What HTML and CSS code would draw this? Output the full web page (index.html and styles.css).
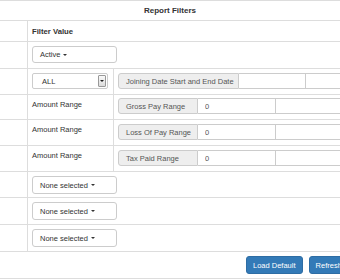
FILE: index.html
```html
<!DOCTYPE html>
<html lang="en">
<head>
    <meta charset="UTF-8">
    <title>Report Filters</title>
    <link rel="stylesheet" href="styles.css">
</head>
<body>
    <div class="filters">
        <div class="row row-title">
            <div class="title">Report Filters</div>
        </div>
        <div class="row row-head">
            <div class="c0"></div>
            <div class="cell-wide head-label">Filter Value</div>
        </div>
        <div class="row h27">
            <div class="c0"></div>
            <div class="cell-wide">
                <button class="dd-btn">Active <span class="caret"></span></button>
            </div>
        </div>
        <div class="row h26">
            <div class="c0"></div>
            <div class="c1">
                <div class="select-box">
                    <span>ALL</span>
                    <span class="select-arrow"><span class="arrow-tri"></span></span>
                </div>
            </div>
            <div class="c2">
                <div class="input-group">
                    <span class="addon w-date">Joining Date Start and End Date</span>
                    <input class="field w-67" type="text" value="">
                    <input class="field w-80" type="text" value="">
                </div>
            </div>
        </div>
        <div class="row h25 pad3">
            <div class="c0"></div>
            <div class="c1 label">Amount Range</div>
            <div class="c2">
                <div class="input-group">
                    <span class="addon w-amt">Gross Pay Range</span>
                    <input class="field w-78" type="text" value="0">
                    <input class="field w-80" type="text" value="">
                </div>
            </div>
        </div>
        <div class="row h26">
            <div class="c0"></div>
            <div class="c1 label">Amount Range</div>
            <div class="c2">
                <div class="input-group">
                    <span class="addon w-amt">Loss Of Pay Range</span>
                    <input class="field w-78" type="text" value="0">
                    <input class="field w-80" type="text" value="">
                </div>
            </div>
        </div>
        <div class="row h26">
            <div class="c0"></div>
            <div class="c1 label">Amount Range</div>
            <div class="c2">
                <div class="input-group">
                    <span class="addon w-amt">Tax Paid Range</span>
                    <input class="field w-78" type="text" value="0">
                    <input class="field w-80" type="text" value="">
                </div>
            </div>
        </div>
        <div class="row h26">
            <div class="c0"></div>
            <div class="cell-wide">
                <button class="dd-btn tall">None selected <span class="caret"></span></button>
            </div>
        </div>
        <div class="row h27">
            <div class="c0"></div>
            <div class="cell-wide">
                <button class="dd-btn tall">None selected <span class="caret"></span></button>
            </div>
        </div>
        <div class="row h27">
            <div class="c0"></div>
            <div class="cell-wide">
                <button class="dd-btn tall">None selected <span class="caret"></span></button>
            </div>
        </div>
        <div class="row h27 row-actions">
            <button class="btn-primary">Load Default</button>
            <button class="btn-primary">Refresh</button>
        </div>
    </div>
</body>
</html>
```

FILE: styles.css
```css
body {
    margin: 0;
    background: #fff;
    font-family: "Liberation Sans", Arial, sans-serif;
    font-size: 7.5px;
    color: #333;
    overflow: hidden;
}

.filters {
    width: 420px;
    border-bottom: 1px solid #ddd;
}

.row {
    display: flex;
    box-sizing: border-box;
    border-top: 1px solid #ddd;
}

.row-title {
    height: 20px;
    width: 340px;
    justify-content: center;
    align-items: center;
}

.title {
    font-weight: bold;
    font-size: 8px;
}

.row-head {
    height: 21px;
}

.h25 { height: 25px; }
.h26 { height: 26px; }
.h27 { height: 27px; }

.c0 {
    width: 27px;
    flex: none;
}

.c1 {
    width: 86px;
    flex: none;
    box-sizing: border-box;
    border-left: 1px solid #ddd;
    padding: 4px 0 0 4px;
}

.c2 {
    flex: 1;
    border-left: 1px solid #ddd;
    padding: 4px 0 0 4px;
}

.pad3 .c1,
.pad3 .c2 {
    padding-top: 3px;
}

.cell-wide {
    flex: 1;
    border-left: 1px solid #ddd;
    padding: 4px 0 0 4px;
}

.head-label {
    font-weight: bold;
    font-size: 7.7px;
    padding-top: 0;
    display: flex;
    align-items: center;
}

.label {
    padding-top: 4px;
    line-height: 11px;
}

.pad3 .label {
    padding-top: 4px;
}

.dd-btn {
    width: 85px;
    height: 17px;
    box-sizing: border-box;
    border: 1px solid #ccc;
    border-radius: 3px;
    background: #fff;
    color: #333;
    font-family: inherit;
    font-size: 7.5px;
    text-align: left;
    padding: 0 0 0 7px;
    display: flex;
    align-items: center;
}

.dd-btn.tall {
    height: 18px;
}

.caret {
    display: inline-block;
    width: 0;
    height: 0;
    margin-left: 3px;
    border-top: 2px solid #333;
    border-left: 2px solid transparent;
    border-right: 2px solid transparent;
}

.select-box {
    width: 76px;
    height: 16px;
    box-sizing: border-box;
    border: 1px solid #ccc;
    border-radius: 2px;
    display: flex;
    align-items: center;
    justify-content: space-between;
    padding: 0 1px 0 9px;
}

.select-arrow {
    width: 8px;
    height: 12px;
    box-sizing: border-box;
    border: 1px solid #999;
    border-radius: 1px;
    background: linear-gradient(#fafafa, #dcdcdc);
    display: flex;
    align-items: center;
    justify-content: center;
}

.arrow-tri {
    width: 0;
    height: 0;
    border-top: 2px solid #222;
    border-left: 2px solid transparent;
    border-right: 2px solid transparent;
}

.input-group {
    display: flex;
    height: 16px;
}

.addon {
    box-sizing: border-box;
    height: 16px;
    background: #eee;
    border: 1px solid #ccc;
    border-radius: 3px 0 0 3px;
    color: #555;
    padding-left: 7px;
    display: flex;
    align-items: center;
    white-space: nowrap;
}

.w-date { width: 121px; }
.w-amt { width: 80px; }

.field {
    box-sizing: border-box;
    height: 16px;
    margin: 0;
    border: 1px solid #ccc;
    border-left: none;
    padding: 0 0 0 7px;
    font-family: inherit;
    font-size: 7.5px;
    color: #555;
    outline: none;
}

.w-67 { width: 67px; }
.w-78 { width: 78px; }
.w-80 { width: 80px; }

.row-actions {
    padding: 4px 0 0 246px;
    gap: 6px;
    align-items: flex-start;
}

.btn-primary {
    height: 18px;
    box-sizing: border-box;
    padding: 0 6px;
    background: #337ab7;
    border: 1px solid #2e6da4;
    border-radius: 3px;
    color: #fff;
    font-family: inherit;
    font-size: 7.5px;
    flex: none;
}
```
